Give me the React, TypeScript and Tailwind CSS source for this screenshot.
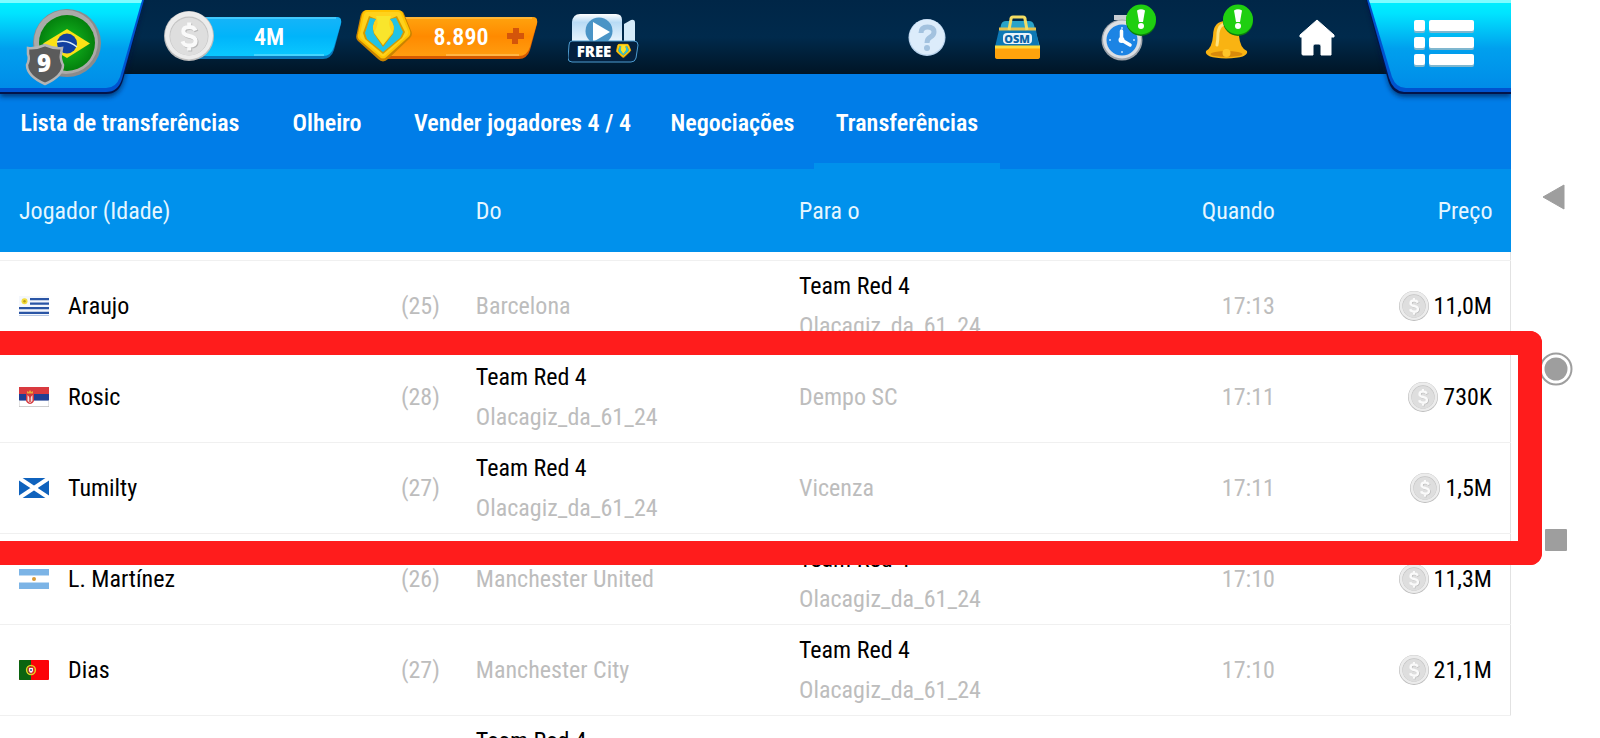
import React from "react";

interface Club {
    name: string;
    manager?: string;
}

interface Transfer {
    player: string;
    flag: string;
    age: number;
    from: Club;
    to: Club;
    time: string;
    price: string;
}

const redTeam: Club = {name: "Team Red 4", manager: "Olacagiz_da_61_24"};

const transfers: Transfer[] = [
    {player: "Araujo", flag: "uy", age: 25, from: {name: "Barcelona"}, to: redTeam, time: "17:13", price: "11,0M"},
    {player: "Rosic", flag: "rs", age: 28, from: redTeam, to: {name: "Dempo SC"}, time: "17:11", price: "730K"},
    {player: "Tumilty", flag: "sc", age: 27, from: redTeam, to: {name: "Vicenza"}, time: "17:11", price: "1,5M"},
    {player: "L. Martínez", flag: "ar", age: 26, from: {name: "Manchester United"}, to: redTeam, time: "17:10", price: "11,3M"},
    {player: "Dias", flag: "pt", age: 27, from: {name: "Manchester City"}, to: redTeam, time: "17:10", price: "21,1M"}
];

const tabs = [
    {label: "Lista de transferências", width: "w-[260px]"},
    {label: "Olheiro", width: "w-[134px]"},
    {label: "Vender jogadores 4 / 4", width: "w-[257px]"},
    {label: "Negociações", width: "w-[163px]"},
    {label: "Transferências", width: "w-[186px]"}
];

const Flag: React.FC<{code: string}> = function ({code}) {
    return (
        <svg viewBox="0 0 30 20" className="w-[30px] h-5 shrink-0" aria-hidden="true">
            {code === "uy" && (
                <>
                    <rect width="30" height="20" fill="#f4f7fc" />
                    <path d="M11 3.2h19M11 7.6h19M0 12.2h30M0 16.8h30" stroke="#2a55a5" strokeWidth="2.2" />
                    <path d="M0 19.6h30" stroke="#9db4da" strokeWidth="0.8" />
                    <circle cx="5.5" cy="5.2" r="3" fill="#f3dc3c" />
                    <circle cx="5.5" cy="5.2" r="1.2" fill="#b79a1c" />
                </>
            )}
            {code === "rs" && (
                <>
                    <rect width="30" height="20" fill="#fff" />
                    <rect width="30" height="7" fill="#d93a3f" />
                    <rect y="7" width="30" height="6.6" fill="#1f3f94" />
                    <path d="M0 19.6h30M0 13v7M30 13v7" stroke="#bbb" strokeWidth="0.8" />
                    <path d="M7 7h8v6q0 3-4 4-4-1-4-4z" fill="#d5383d" />
                    <path d="M8.5 8l2.5 3 2.5-3v6l-2.5 2-2.5-2z" fill="#f2dede" />
                    <path d="M11 10v5" stroke="#d5383d" strokeWidth="1.4" />
                    <path d="M8 6.4V4l1.6 1L11 3l1.4 2L14 4v2.4z" fill="#e9a93a" />
                </>
            )}
            {code === "sc" && (
                <>
                    <rect width="30" height="20" fill="#0f62bd" />
                    <path d="M0 0L30 20M30 0L0 20" stroke="#fff" strokeWidth="4" />
                </>
            )}
            {code === "ar" && (
                <>
                    <rect width="30" height="20" fill="#7cb4e6" />
                    <rect y="6.5" width="30" height="7" fill="#fff" />
                    <circle cx="15" cy="10" r="2" fill="#d99a36" />
                </>
            )}
            {code === "pt" && (
                <>
                    <rect width="30" height="20" rx="1" fill="#fb0307" />
                    <path d="M1 0h11v20H1q-1 0-1-1V1q0-1 1-1z" fill="#0a6410" />
                    <circle cx="12" cy="10" r="4.4" fill="none" stroke="#e3d024" strokeWidth="1.5" />
                    <path d="M9.6 7.4h4.8v3.4q0 2-2.4 2.6-2.4-.6-2.4-2.6z" fill="#fff" stroke="#d4242a" />
                    <circle cx="12" cy="10" r="1" fill="#2b4a9b" />
                </>
            )}
        </svg>
    );
};

const dollar = "M31.5 19.5q-1.4-3.6-6.3-3.6-5.9 0-5.9 4.4 0 3.5 6 4.7 6.3 1.3 6.3 5 0 4.6-6.2 4.6-5.4 0-6.9-4.2M25.2 11.5v4.5M25.2 35v4.5";

const Coin: React.FC<{className: string}> = function ({className}) {
    return (
        <svg viewBox="0 0 50 50" className={className} aria-hidden="true">
            <circle cx="25" cy="25" r="25" fill="#bdbdbd" />
            <circle cx="25" cy="24.4" r="24" fill="#ececec" />
            <circle cx="25" cy="25" r="19.5" fill="#c4c4c4" />
            <circle cx="25" cy="25.6" r="18.8" fill="#dedede" />
            <path d={dollar} fill="none" stroke="#b8b8b8" strokeWidth="4" transform="translate(1 1)" />
            <path d={dollar} fill="none" stroke="#fafafa" strokeWidth="4" />
        </svg>
    );
};

// club emblem used as the premium currency, drawn in a 56x52 box
const Gem = function () {
    return (
        <g strokeLinejoin="round">
            <path d="M10 2H43Q46 2 47 5L54 22Q55 25 53 27L31 48Q27 52 23 48L3 30Q1 28 2 25L6 6Q7 2 10 2Z" fill="#c98300" stroke="#c98300" strokeWidth="3" />
            <path d="M11 1H42Q45 1 46 4L53 21Q54 24 52 26L30 46Q27 49 24 46L4 29Q2 27 3 24L7 5Q8 1 11 1Z" fill="#ffd21c" stroke="#ffc400" strokeWidth="2" />
            <path d="M13 6L20 9Q15 15 18 23L27 35L37 23Q40 15 34 9L41 6L49 22L46 28L27 44L9 29L7 23Z" fill="#d29b00" />
            <path d="M14 8L20 9Q15 15 18 24L27 37L37 24Q40 15 34 9L40 8L47 22L44 28L27 42L11 29L9 23Z" fill="#22c3e6" />
            <path d="M20 6H35Q31 14 36 22L27 35L18 22Q24 14 20 6Z" fill="#f9e52c" />
        </g>
    );
};

const AlertBadge: React.FC<{cx: number}> = function ({cx}) {
    return (
        <g>
            <circle cx={cx} cy="21" r="15" fill="#0b7d0d" />
            <circle cx={cx} cy="19.5" r="15" fill="#1fcf10" />
            <path d={`M${cx - 4} 10.5q4-2.5 8 0l-2 11.5h-4z`} fill="#fff" />
            <circle cx={cx} cy="26" r="3" fill="#fff" />
        </g>
    );
};

const ProfileButton = function () {
    return (
        <button type="button" aria-label="Perfil" className="absolute left-0 top-0 z-10">
            <svg viewBox="0 0 150 104" className="w-[150px] h-[104px]">
                <defs>
                    <linearGradient id="panel" x1="0" y1="0" x2="0" y2="1">
                        <stop offset="0" stopColor="#00f0ff" />
                        <stop offset="0.15" stopColor="#00e4ff" />
                        <stop offset="0.55" stopColor="#00a0ee" />
                        <stop offset="1" stopColor="#008ce8" />
                    </linearGradient>
                    <radialGradient id="green">
                        <stop offset="0" stopColor="#15c022" />
                        <stop offset="1" stopColor="#04800d" />
                    </radialGradient>
                    <filter id="shade" x="-10%" y="-10%" width="120%" height="130%">
                        <feGaussianBlur stdDeviation="2.5" />
                    </filter>
                </defs>
                <path d="M0 0H144L124 80Q120 97 106 97H0Z" fill="#00143c" opacity="0.6" filter="url(#shade)" />
                <path d="M0 0H144L123 80Q119 94 106 94H0Z" fill="#03144a" />
                <path d="M0 0H144L122 79Q118 92 106 92H0Z" fill="#0053cf" />
                <path d="M0 0H142L120 77Q116 88 106 88H0Z" fill="url(#panel)" />
                <path d="M0 0H142L141 3H0Z" fill="#7ffcff" />
                <circle cx="67" cy="43" r="34" fill="#8b8b8b" />
                <circle cx="66" cy="42" r="32" fill="#aaa" />
                <circle cx="67" cy="43" r="28" fill="url(#green)" />
                <path d="M43 43.5L67 29L90 43.5L67 58Z" fill="#fbe116" />
                <circle cx="67" cy="43.5" r="10" fill="#1240a0" />
                <path d="M57 42q11-3 20 5" fill="none" stroke="#d9eaf8" strokeWidth="1.5" />
                <path
                    d="M28 48Q36 49 45 45Q54 49 62 48L61 54Q60 59 63 65Q63 76 45 84Q27 76 27 65Q30 59 28 54Z"
                    fill="#5b5b5b"
                    stroke="#b4b4b4"
                    strokeWidth="2.5"
                />
                <text x="44" y="72" textAnchor="middle" fill="#fff" className="font-['Open_Sans',sans-serif] font-extrabold text-[24px]">
                    9
                </text>
            </svg>
        </button>
    );
};

const MenuButton = function () {
    return (
        <button type="button" aria-label="Menu" className="absolute right-0 top-0 z-10">
            <svg viewBox="0 0 151 104" className="w-[151px] h-[104px]">
                <path d="M7 0H151V97H45Q32 97 28 82Z" fill="#00143c" opacity="0.6" filter="url(#shade)" />
                <path d="M6 0H151V94H44Q32 94 28 80Z" fill="#03144a" />
                <path d="M7 0H151V92H44Q33 91 29 78Z" fill="#0053cf" />
                <path d="M9 0H151V88H46Q36 88 32 77Z" fill="url(#panel)" />
                <path d="M9 0H151V3H10Z" fill="#7ffcff" />
                {[20, 37, 54].map((y) => (
                    <g key={y}>
                        <rect x="54" y={y + 1} width="11" height="12" rx="2" fill="#7fb7cf" />
                        <rect x="69" y={y + 1} width="45" height="12" rx="2" fill="#7fb7cf" />
                        <rect x="54" y={y} width="11" height="11" rx="2" fill="#fff" />
                        <rect x="69" y={y} width="45" height="11" rx="2" fill="#fff" />
                    </g>
                ))}
            </svg>
        </button>
    );
};

const TopBar = function () {
    return (
        <header className="relative flex items-start justify-between h-[74px] pl-[164px] pr-[176px] bg-linear-to-b from-[#002647] via-[#002a4c] to-[#001526]">
            <ProfileButton />
            <div className="flex">
                <button type="button" className="relative h-[74px] w-[178px] text-white font-semibold text-2xl">
                    <svg viewBox="0 0 178 74" className="absolute inset-0" aria-hidden="true">
                        <defs>
                            <linearGradient id="cash" x1="0" y1="0" x2="0" y2="1">
                                <stop offset="0" stopColor="#17b4f8" />
                                <stop offset="0.5" stopColor="#00b4fa" />
                                <stop offset="1" stopColor="#0ac8ff" />
                            </linearGradient>
                        </defs>
                        <path d="M30 18H173Q178 18 177 24L170 50Q167 59 159 59H30Z" fill="#0a78bc" />
                        <path d="M30 17H173Q178 17 177 23L170 47Q167 56 159 56H30Z" fill="url(#cash)" />
                        <path d="M30 18H172" stroke="#6fdcff" />
                        <path d="M90 55H160" stroke="#7fe4ff" />
                    </svg>
                    <Coin className="absolute left-0 top-[11px] w-[50px] h-[50px]" />
                    <span className="relative pl-8">4M</span>
                </button>
                <button type="button" className="relative ml-3.5 h-[74px] w-[182px] text-white font-semibold text-2xl">
                    <svg viewBox="0 0 182 74" className="absolute inset-0" aria-hidden="true">
                        <defs>
                            <linearGradient id="gold" x1="0" y1="0" x2="0" y2="1">
                                <stop offset="0" stopColor="#ffa30e" />
                                <stop offset="0.5" stopColor="#ff8a00" />
                                <stop offset="1" stopColor="#ff9d10" />
                            </linearGradient>
                        </defs>
                        <path d="M30 18H177Q182 18 181 24L174 50Q171 59 163 59H30Z" fill="#d65a00" />
                        <path d="M30 17H177Q182 17 181 23L174 47Q171 56 163 56H30Z" fill="url(#gold)" />
                        <path d="M30 18H176" stroke="#ffc95c" />
                        <path d="M90 55H163" stroke="#ffd07a" />
                        <path d="M157 28h6v5h5v6h-6v5h-6v-5h-5v-6h6z" fill="#d4550a" />
                        <g transform="translate(0 10)">
                            <Gem />
                        </g>
                    </svg>
                    <span className="relative pl-7">8.890</span>
                </button>
                <button type="button" aria-label="Ver vídeo grátis" className="ml-[30px]">
                    <svg viewBox="0 0 76 74" className="w-[76px] h-[74px]">
                        <defs>
                            <linearGradient id="camera" x1="0" y1="0" x2="0" y2="1">
                                <stop offset="0" stopColor="#fff" />
                                <stop offset="0.3" stopColor="#b8dbf5" />
                                <stop offset="1" stopColor="#eaf5fd" />
                            </linearGradient>
                        </defs>
                        <path d="M4 42V22Q5 14 12 14H48Q54 14 54 20V42Z" fill="url(#camera)" />
                        <path d="M56 24L63 20Q67 19 67 23V42H56Z" fill="#d5ebf9" />
                        <circle cx="31" cy="31" r="13.5" fill="#4a94c6" />
                        <path d="M25 22L42 32L25 42Z" fill="#fff" />
                        <path d="M4 41H66Q70 41 70 45L68 58Q67 62 63 62H4Q0 62 0 58L1 45Q1 41 4 41Z" fill="#04213f" stroke="#4d9cd0" />
                        <text x="26" y="57" textAnchor="middle" fill="#fff" className="font-['Open_Sans',sans-serif] font-extrabold text-[15px]">
                            FREE
                        </text>
                        <g transform="translate(48 44) scale(0.27)">
                            <Gem />
                        </g>
                    </svg>
                </button>
            </div>
            <div className="flex gap-12">
                <button type="button" aria-label="Ajuda">
                    <svg viewBox="0 0 44 74" className="w-11 h-[74px]">
                        <circle cx="22" cy="37.5" r="18.5" fill="#b9d3ec" />
                        <circle cx="22" cy="37" r="17.5" fill="#dcecfb" />
                        <path d="M16 33q0-6 6.500-6 6.500 0 6.500 5 0 3-3.500 5-3.500 1.800-3.500 6" fill="none" stroke="#a3c2df" strokeWidth="5" />
                        <circle cx="22" cy="48" r="3" fill="#a3c2df" />
                    </svg>
                </button>
                <button type="button" aria-label="Loja">
                    <svg viewBox="0 0 42 74" className="w-[42px] h-[74px] overflow-visible">
                        <path d="M4 25Q5 21 9 21H32Q36 21 37 25L43 47H-1Z" fill="#2aa3c9" />
                        <path d="M2 30H39L42 47H-2Z" fill="#0d78b5" />
                        <path d="M2 29H39" stroke="#e7c14a" strokeWidth="3" />
                        <path d="M-2 46H43V57Q43 59 40 59H1Q-2 59-2 57Z" fill="#ffa30c" />
                        <path d="M-2 47H43" stroke="#ffdc3c" strokeWidth="3" />
                        <path d="M12 30L14 19Q14 17 16 17H26Q28 17 28 19L30 30" fill="none" stroke="#f4dd63" strokeWidth="3" />
                        <rect x="6" y="33" width="29" height="11" rx="4" fill="#e8f4fb" />
                        <text x="20" y="43" textAnchor="middle" fill="#0b64a6" className="font-['Open_Sans',sans-serif] font-extrabold text-[11px]">
                            OSM
                        </text>
                    </svg>
                </button>
                <button type="button" aria-label="Eventos">
                    <svg viewBox="0 0 69 74" className="w-[69px] h-[74px]">
                        <path d="M27 15h14v5h-4v3h-6v-3h-4z" fill="#c7ccd2" />
                        <circle cx="35" cy="40" r="20.5" fill="#9ea4ab" />
                        <circle cx="35" cy="39.5" r="19" fill="#dcdfe3" />
                        <circle cx="35" cy="40" r="15.5" fill="#1c84e4" />
                        <path d="M34.5 31V40L43 45" fill="none" stroke="#fff" strokeWidth="3.5" strokeLinecap="round" strokeLinejoin="round" />
                        <circle cx="34.5" cy="40" r="3" fill="#fff" />
                        <path d="M35 27v2M35 51v2M22 40h2M46 40h2" stroke="#bfe0ff" strokeWidth="1.5" />
                        <AlertBadge cx={54} />
                    </svg>
                </button>
                <button type="button" aria-label="Notificações">
                    <svg viewBox="0 0 47 74" className="w-[47px] h-[74px] overflow-visible">
                        <path d="M2 51Q8 48 9 36Q9 21 22 21Q35 21 35 36Q36 48 43 51Q45 58 22 58.500Q0 58 2 51Z" fill="#f9b312" />
                        <path d="M13 45Q14 40 14 33Q15 25 21 24" fill="none" stroke="#ffe37c" strokeWidth="3" strokeLinecap="round" />
                        <ellipse cx="22.5" cy="54" rx="16" ry="3" fill="#d98a0a" />
                        <circle cx="22.5" cy="53" r="4" fill="#ffc629" />
                        <AlertBadge cx={34} />
                    </svg>
                </button>
                <button type="button" aria-label="Início">
                    <svg viewBox="0 0 36 74" className="w-9 h-[74px]">
                        <path
                            d="M18 20L35 35V37H32V55H22V46Q22 44 20 44H16Q14 44 14 46V55H4Q3 55 3 54V37H1V35Z"
                            fill="#fff"
                            stroke="#fff"
                            strokeLinejoin="round"
                        />
                    </svg>
                </button>
            </div>
            <MenuButton />
        </header>
    );
};

const ClubCell: React.FC<{club: Club}> = function ({club}) {
    return (
        <td className="p-0 leading-10 text-[#bdbdbd]">
            {club.manager ? <div className="text-black">{club.name}</div> : club.name}
            {club.manager && <div>{club.manager}</div>}
        </td>
    );
};

const TransferRow: React.FC<{transfer: Transfer}> = function ({transfer}) {
    return (
        <tr className="h-[91px] border-b border-[#f0f0f0]">
            <td className="p-0">
                <div className="flex items-center pl-[19px] pr-9">
                    <Flag code={transfer.flag} />
                    <span className="ml-[19px] grow">{transfer.player}</span>
                    <span className="text-[#bdbdbd]">({transfer.age})</span>
                </div>
            </td>
            <ClubCell club={transfer.from} />
            <ClubCell club={transfer.to} />
            <td className="p-0 text-right text-[#bdbdbd]">{transfer.time}</td>
            <td className="p-0">
                <div className="flex items-center justify-end gap-[5px] pr-[18px]">
                    <Coin className="w-[30px] h-[30px]" />
                    <span>{transfer.price}</span>
                </div>
            </td>
        </tr>
    );
};

const SystemNav = function () {
    return (
        <nav aria-label="Sistema" className="w-[89px] shrink-0 flex flex-col items-center justify-center gap-[137px] bg-white">
            <button type="button" aria-label="Voltar">
                <svg viewBox="0 0 34 34" className="w-[34px] h-[34px]">
                    <path d="M4 16L25 4V28Z" fill="#9e9e9e" stroke="#9e9e9e" strokeLinejoin="round" />
                </svg>
            </button>
            <button type="button" aria-label="Tela inicial">
                <svg viewBox="0 0 34 34" className="w-[34px] h-[34px]">
                    <circle cx="17" cy="17" r="15.5" fill="none" stroke="#9e9e9e" strokeWidth="2" />
                    <circle cx="17" cy="17" r="11.5" fill="#9e9e9e" />
                </svg>
            </button>
            <button type="button" aria-label="Recentes">
                <svg viewBox="0 0 34 34" className="w-[34px] h-[34px]">
                    <rect x="6" y="6" width="22" height="22" rx="1" fill="#9e9e9e" />
                </svg>
            </button>
        </nav>
    );
};

const App: React.FC = function () {
    return (
        <div className="relative flex h-screen overflow-hidden bg-white text-black text-2xl font-['Liberation_Sans_Narrow','Roboto_Condensed','Open_Sans_Condensed','DejaVu_Sans_Condensed',sans-serif]">
            <div className="grow min-w-0">
                <TopBar />
                <nav className="flex h-[95px] bg-[#007de8] text-white font-semibold">
                    {tabs.map((tab) => (
                        <a
                            key={tab.label}
                            href="#"
                            className={`${tab.width} pt-[31px] leading-9 text-center whitespace-nowrap ${
                                tab.label === "Transferências" ? "border-b-[6px] border-[#0091ec]" : ""
                            }`}
                        >
                            {tab.label}
                        </a>
                    ))}
                </nav>
                <table className="w-full table-fixed border-collapse">
                    <colgroup>
                        <col className="w-[31.5%]" />
                        <col className="w-[21.4%]" />
                        <col className="w-[20%]" />
                        <col className="w-[11.5%]" />
                        <col className="w-[15.6%]" />
                    </colgroup>
                    <thead>
                        <tr className="h-[83px] bg-[#0091ec] text-[#e6f6ff] text-left">
                            <th className="p-0 pl-[19px] font-normal">Jogador (Idade)</th>
                            <th className="p-0 font-normal">Do</th>
                            <th className="p-0 font-normal">Para o</th>
                            <th className="p-0 font-normal text-right">Quando</th>
                            <th className="p-0 pr-[18px] font-normal text-right">Preço</th>
                        </tr>
                    </thead>
                    <tbody className="border-r border-[#e2e2e2]">
                        <tr className="h-2 border-b border-[#f0f0f0]">
                            <td colSpan={5} className="p-0"></td>
                        </tr>
                        {transfers.map((transfer) => (
                            <TransferRow key={transfer.player} transfer={transfer} />
                        ))}
                    </tbody>
                    <tbody>
                        <tr className="h-[91px] align-top">
                            <td className="p-0"></td>
                            <td className="p-0 pt-[5px] leading-10">{redTeam.name}</td>
                            <td className="p-0" colSpan={3}></td>
                        </tr>
                    </tbody>
                </table>
            </div>
            <SystemNav />
            {/* marks the two sales of the red team */}
            <div className="absolute left-0 right-[58px] top-[331px] h-[234px] border-24 border-l-0 border-[#ff1c1c] rounded-r-xl pointer-events-none"></div>
        </div>
    );
};

export default App;
